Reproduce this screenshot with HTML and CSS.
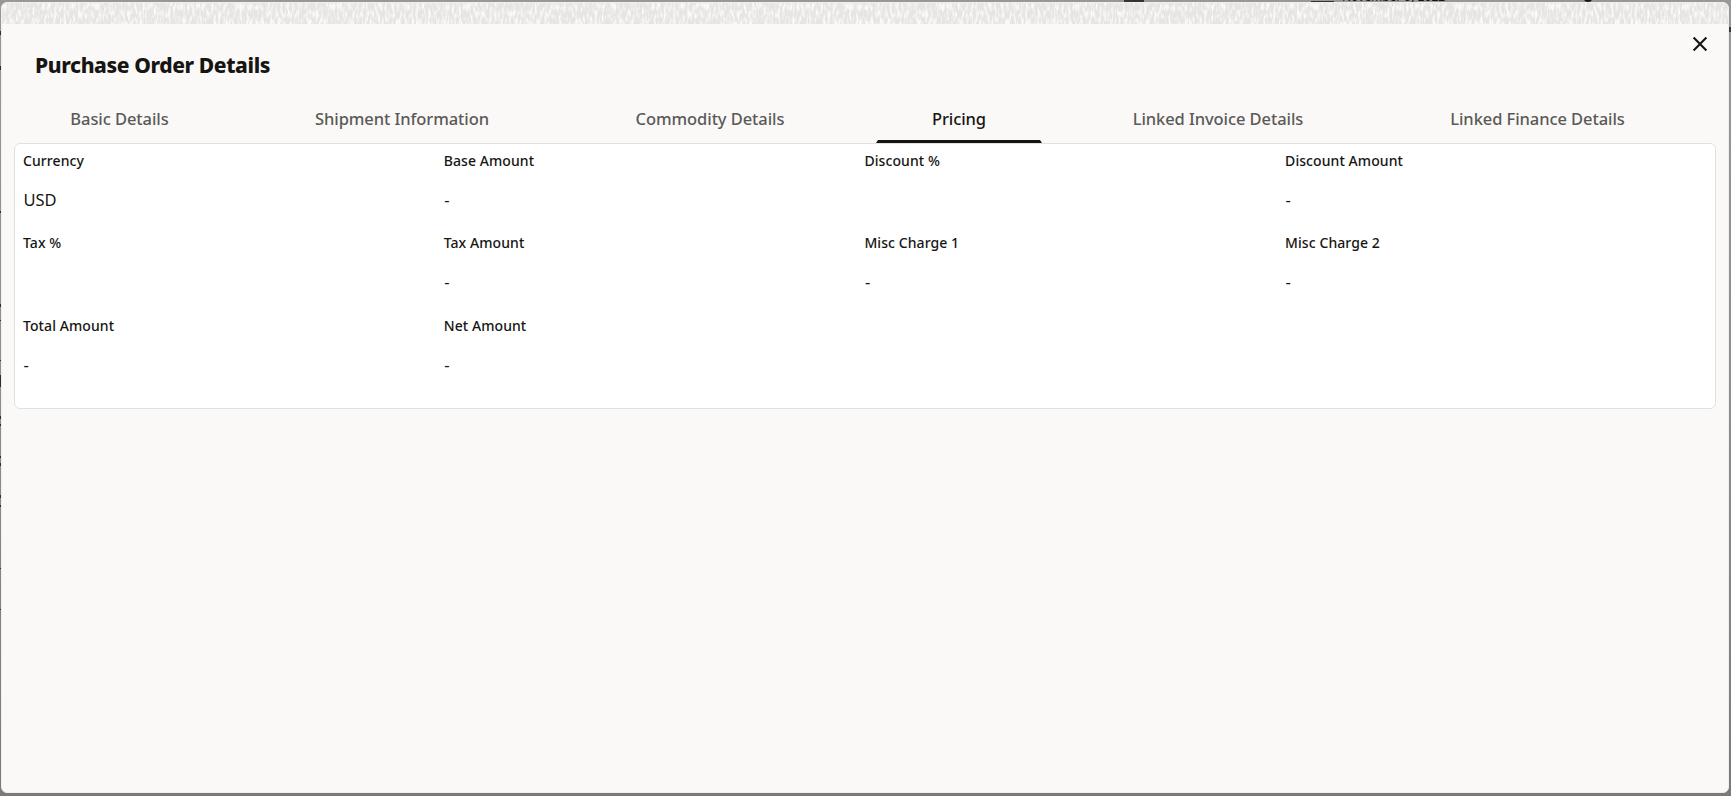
FILE: index.html
```html
<!DOCTYPE html>
<html lang="en">
<head>
<meta charset="utf-8">
<title>Purchase Order Details</title>
<link rel="stylesheet" href="styles.css">
</head>
<body>
<div class="backdrop">
  <span class="behind behind-button"></span>
  <span class="behind behind-rule"></span>
  <span class="behind behind-date">November 9, 2022</span>
  <span class="behind behind-dot"></span>
  <span class="behind behind-edge"></span>
  <svg class="behind-marks" width="1" height="796"><path d="M.5 31v4M.5 66v4M.5 211v2M.5 304v3M.5 320v1M.5 360v1M.5 375v12M.5 416v3M.5 424v2M.5 456v2M.5 463v3M.5 495v3M.5 505v2M.5 568v1M.5 609v1" stroke="#2f2d2d"/></svg>
</div>
<main class="dialog">
  <svg class="texture" width="1727" height="22" aria-hidden="true">
    <filter id="grain" x="0" y="0" width="100%" height="100%" color-interpolation-filters="sRGB">
      <feTurbulence type="fractalNoise" baseFrequency="0.42 0.13" numOctaves="2" seed="8"/>
      <feColorMatrix values="0 0 0 0 0.985  0 0 0 0 0.982  0 0 0 0 0.976  3.2 0 0 0 -1.35"/>
    </filter>
    <rect width="1727" height="22" fill="#e6e5e3"/>
    <rect width="1727" height="22" filter="url(#grain)"/>
  </svg>
  <header class="dialog-header">
    <h1 class="title">Purchase Order Details</h1>
    <button class="close" aria-label="Close">
      <svg width="16" height="16" viewBox="0 0 16 16"><path d="M1.6 1.6 14.4 14.4M14.4 1.6 1.6 14.4" fill="none" stroke="#161513" stroke-width="2.1"/></svg>
    </button>
  </header>
  <nav class="tabs">
    <a class="tab"><span>Basic Details</span></a>
    <a class="tab"><span>Shipment Information</span></a>
    <a class="tab"><span>Commodity Details</span></a>
    <a class="tab active"><span>Pricing</span></a>
    <a class="tab"><span>Linked Invoice Details</span></a>
    <a class="tab"><span>Linked Finance Details</span></a>
  </nav>
  <section class="panel">
    <div class="field"><div class="label">Currency</div><div class="value">USD</div></div>
    <div class="field"><div class="label">Base Amount</div><div class="value">-</div></div>
    <div class="field"><div class="label">Discount %</div><div class="value"></div></div>
    <div class="field"><div class="label">Discount Amount</div><div class="value">-</div></div>
    <div class="field"><div class="label">Tax %</div><div class="value"></div></div>
    <div class="field"><div class="label">Tax Amount</div><div class="value">-</div></div>
    <div class="field"><div class="label">Misc Charge 1</div><div class="value">-</div></div>
    <div class="field"><div class="label">Misc Charge 2</div><div class="value">-</div></div>
    <div class="field"><div class="label">Total Amount</div><div class="value">-</div></div>
    <div class="field"><div class="label">Net Amount</div><div class="value">-</div></div>
  </section>
</main>
</body>
</html>
```

FILE: styles.css
```css
* { box-sizing: border-box; }
body {
  margin: 0;
  height: 796px;
  overflow: hidden;
  padding: 2px 2px 3px 1px;
  background: linear-gradient(#9a979a, #8f8d8d 50%, #7c7979);
  font-family: "Noto Sans", "Open Sans", sans-serif;
  color: #161513;
}
.backdrop { position: absolute; inset: 0; overflow: hidden; }
.behind { position: absolute; }
.behind-button { left: 1124px; top: 0; width: 20px; height: 2px; background: #333; }
.behind-rule { left: 1311px; top: 1px; width: 23px; height: 1px; background: #333; }
.behind-date { left: 1342px; top: -12px; font-size: 12px; line-height: 18px; white-space: nowrap; }
.behind-dot { left: 1584px; top: -4px; width: 8px; height: 6px; border-radius: 50%; background: #161513; }
.behind-edge { left: 1729px; top: 27px; width: 2px; height: 5px; background: #3a3838; }
.behind-marks { position: absolute; left: 0; top: 0; }
.dialog {
  position: relative;
  height: 791px;
  border: 1px solid #f1efed;
  border-radius: 6px;
  background: #faf9f7;
  overflow: hidden;
}
.texture { display: block; height: 21px; }
.dialog-header { display: flex; justify-content: space-between; height: 75px; padding: 0 20px 0 33px; }
.title { margin: 25px 0 0; font-size: 21px; font-weight: 800; line-height: 32px; letter-spacing: -0.4px; white-space: nowrap; }
.close { display: flex; margin: 12px 0 0; padding: 0; border: 0; background: none; height: 16px; }
.tabs {
  display: grid;
  grid-template-columns: 211px 284px 262px 166px 282px 287px;
  column-gap: 35px;
  height: 44px;
  padding-left: 12px;
}
.tab {
  display: flex;
  align-items: center;
  justify-content: center;
  height: 44px;
  padding-bottom: 6px;
  font-size: 16.5px;
  font-weight: 500;
  letter-spacing: -0.08px;
  color: #5b5957;
  white-space: nowrap;
}
.tab.active {
  color: #161513;
  background: linear-gradient(#161513, #161513) bottom / 100% 3px no-repeat;
  clip-path: polygon(0 0, 100% 0, 100% 41px, calc(100% - 2px) 41px, 100% 100%, 0 100%, 2px 41px, 0 41px);
}
.panel {
  display: grid;
  grid-template-columns: repeat(4, 420.7px);
  grid-template-rows: repeat(3, 82.3px);
  height: 266px;
  margin: 0 12px 0 12px;
  padding: 5px 8px 0;
  border: 1px solid #e1e0de;
  border-radius: 6px;
  background: #fff;
}
.label { font-size: 14px; font-weight: 500; line-height: 24px; letter-spacing: 0.08px; white-space: nowrap; }
.value { margin-top: 15px; padding-left: 0.5px; font-size: 16.5px; line-height: 24px; }
```
